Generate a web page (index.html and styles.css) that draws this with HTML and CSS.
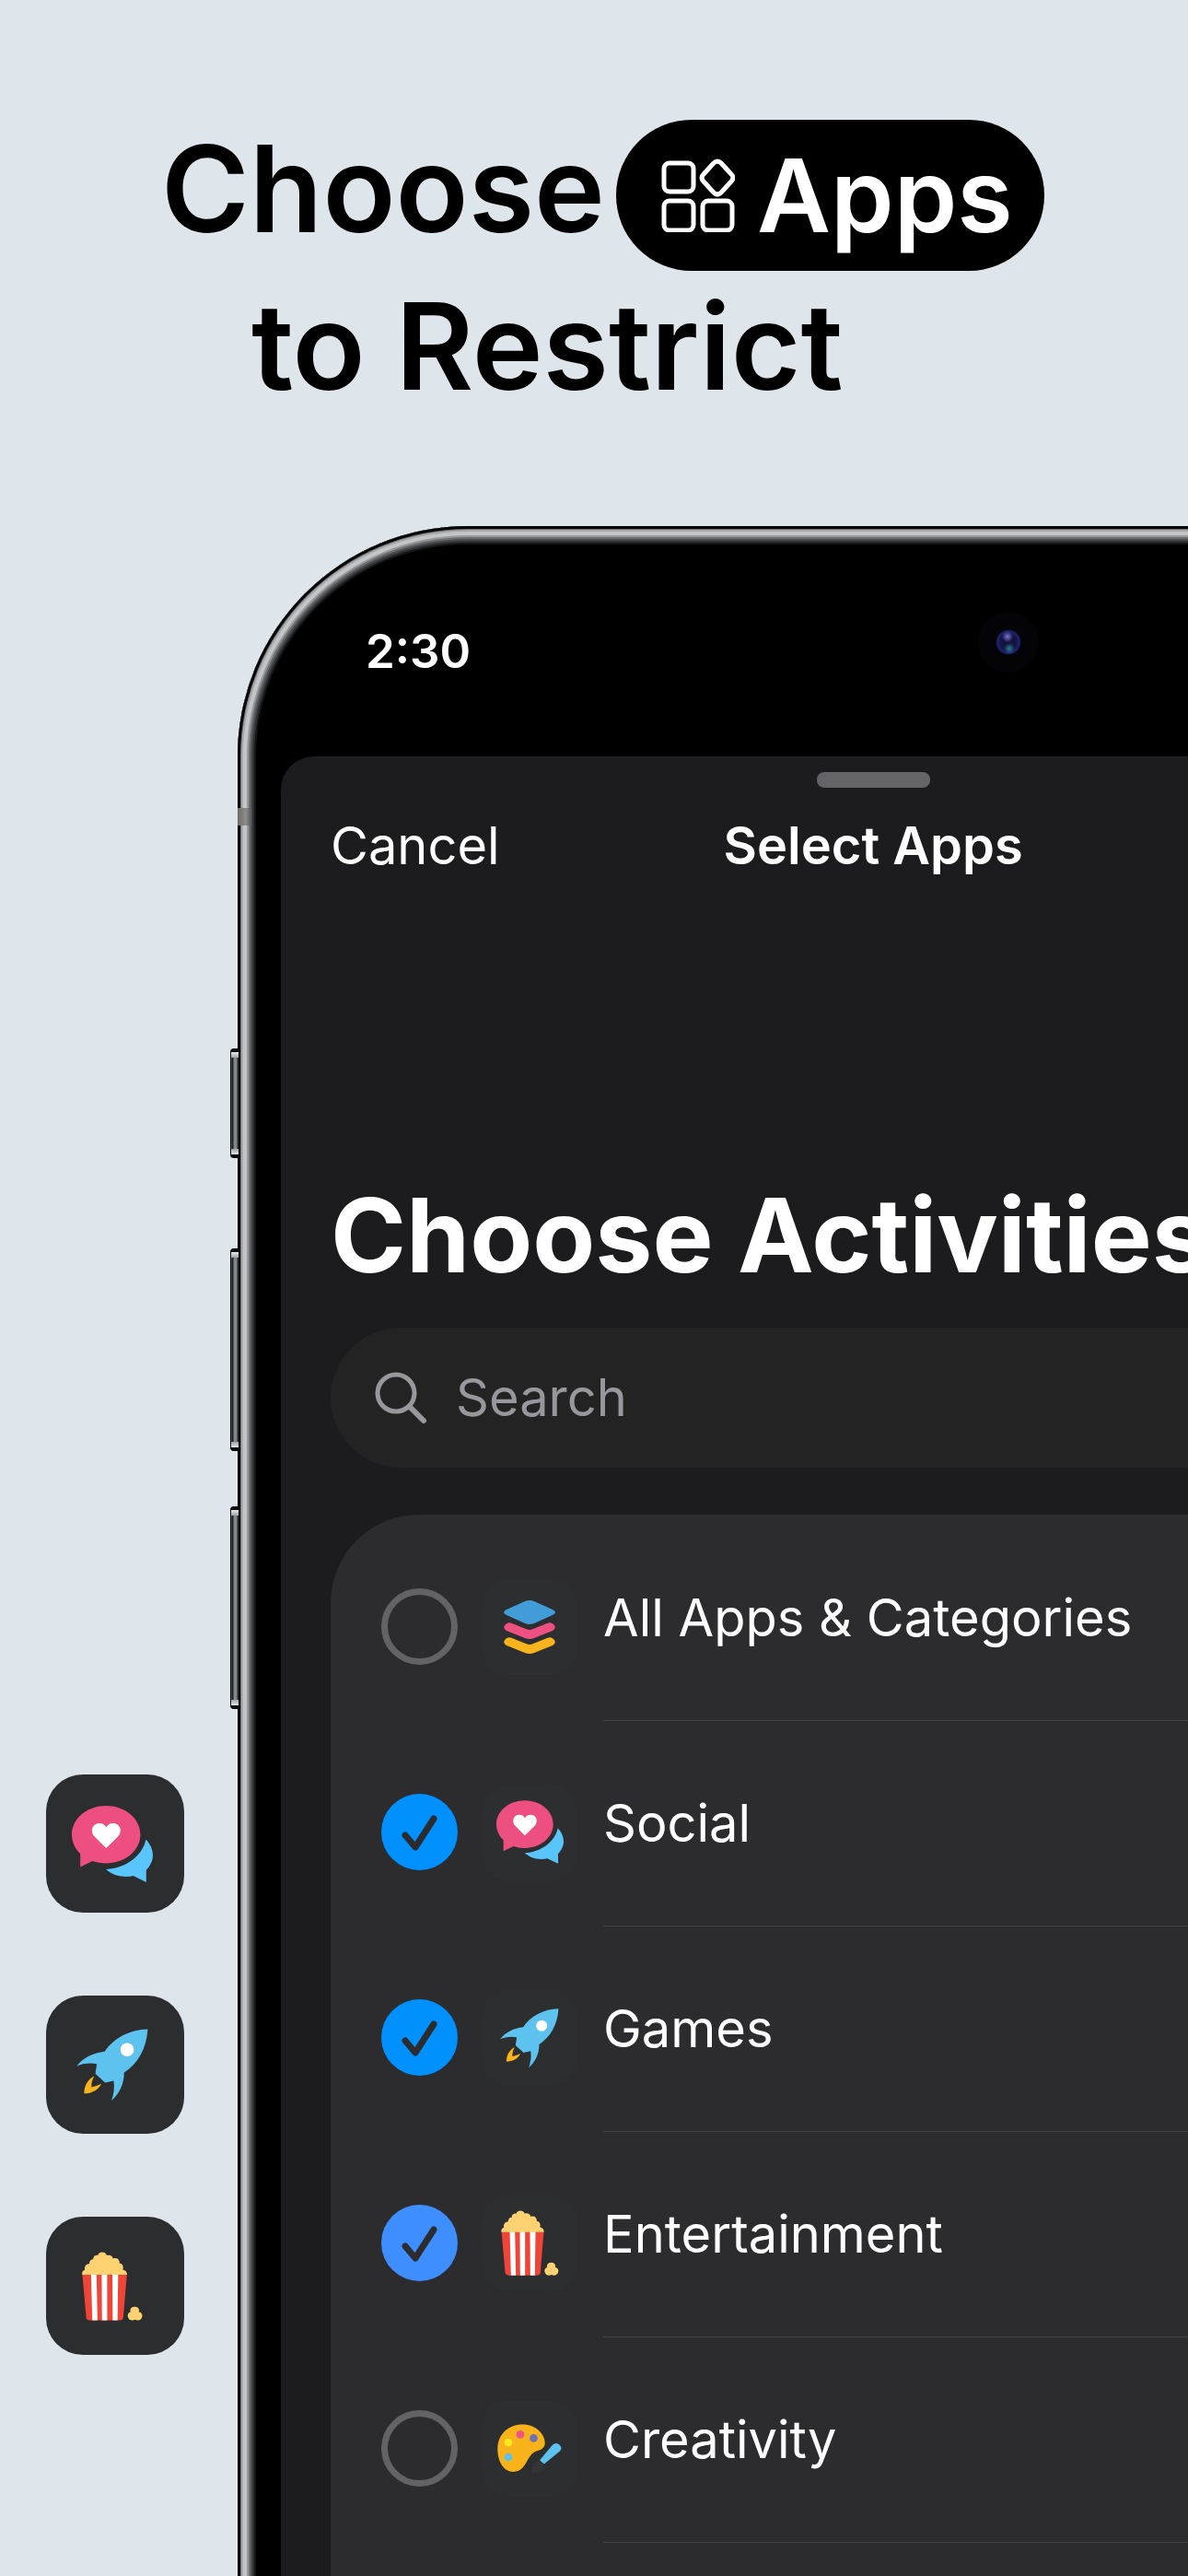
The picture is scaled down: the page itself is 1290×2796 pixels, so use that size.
FILE: index.html
```html
<!DOCTYPE html>
<html lang="en">
  <head>
    <meta charset="UTF-8" />
    <meta name="viewport" content="width=device-width, initial-scale=1.0" />
    <title>Choose Apps to Restrict</title>
    <link rel="stylesheet" href="styles.css">
  </head>
  <body>
    <!-- shared icons -->
    <svg class="defs" aria-hidden="true">
      <symbol id="stack" viewBox="0 0 56 58">
        <path fill="#419cd8" d="M23 1Q28 -1 33 1L53 10Q59 13 53 16L33 25Q28 27 23 25L3 16Q-3 13 3 10Z"/>
        <path fill="#ef5082" d="M2 26Q5 23 9 25L24 31Q28 33 32 31L47 25Q51 23 54 26Q58 30 53 33L33 41Q28 43 23 41L3 33Q-2 30 2 26Z"/>
        <path fill="#f9b31c" d="M2 42Q5 39 9 41L24 47Q28 49 32 47L47 41Q51 39 54 42Q58 46 53 49L33 57Q28 59 23 57L3 49Q-2 46 2 42Z"/>
      </symbol>
      <symbol id="social" viewBox="448 108 220 207">
        <path fill="#ec4f80" d="M541 108C592 108 634 142 634 186C634 230 592 264 541 264C528 264 515 262 504 258L471 274V238C457 225 448 206 448 186C448 142 490 108 541 108Z"/>
        <path fill="#fff" d="M541 223L511 193C496 178 503 155 523 155C533 155 538 160 541 166C545 160 550 155 560 155C580 155 587 178 572 193Z"/>
        <path fill="#5ac5fa" d="M649 199C662 213 668 228 668 242C668 257 660 272 650 282V315L615 298C588 304 558 297 541 280C592 278 640 245 649 199Z"/>
      </symbol>
      <symbol id="rocket" viewBox="459 782 191 192">
        <path fill="#5dc3ee" d="M649 783C600 784 556 808 534 843C504 846 475 860 459 882C475 874 497 872 513 876L509 902L535 926L558 921C561 940 558 958 552 974C573 957 586 930 586 899C622 876 646 835 649 783Z"/>
        <circle cx="594" cy="838" r="18" fill="#fff"/>
        <path fill="#f9b31c" d="M506 908C488 918 479 935 479 955C499 955 517 946 525 929C515 934 507 936 499 938C498 928 500 920 506 908Z"/>
      </symbol>
      <symbol id="popcorn" viewBox="466 116 188 213">
        <path fill="#ef4438" d="M467 184H605L594 318Q593 328 583 328H491Q480 328 479 318Z"/>
        <path fill="#fff" d="M494 184H511L514 328H498ZM527 184H544V328H528ZM560 184H578L576 328H561Z"/>
        <path fill="#fed270" d="M467 187C465 178 470 173 475 172C472 162 479 154 489 153C488 145 494 138 501 139C499 131 508 125 515 127C519 114 538 114 543 127C551 124 561 128 562 137C574 133 583 140 582 151C592 152 596 163 592 171C602 173 606 179 605 187Z"/>
        <path fill="#fed270" d="M616 302C613 292 620 286 629 286C639 286 645 292 642 302C650 302 654 310 652 317C649 328 639 330 630 326C621 330 611 328 608 317C606 309 610 303 616 302Z"/>
      </symbol>
      <symbol id="palette" viewBox="454 812 211 162">
        <path fill="#f8b31b" d="M537 813C580 813 610 845 610 873C610 890 597 897 584 900C548 910 552 968 507 968C475 968 455 935 455 893C455 845 490 813 537 813Z"/>
        <circle cx="529" cy="846" r="13" fill="#ef5285"/>
        <circle cx="573" cy="858" r="13" fill="#7071b5"/>
        <circle cx="490" cy="872" r="13" fill="#fbe91e"/>
        <circle cx="490" cy="920" r="13" fill="#5dc3ee"/>
        <path fill="#5dc3ee" d="M593 930L634 881Q647 870 658 880Q669 891 657 902L607 943Z"/>
        <path fill="#343434" d="M564 972C572 962 565 942 582 934L592 932L606 945C609 962 590 976 564 972Z"/>
      </symbol>
    </svg>

    <header class="headline">
      <h1>
        <span class="line first">
          Choose
          <span class="pill">
            <svg class="grid-icon" viewBox="0 0 80 80" fill="none" stroke="#fff" stroke-width="5" aria-hidden="true">
              <rect x="3" y="5" width="32" height="31" rx="6"/>
              <rect x="3" y="46" width="32" height="32" rx="6"/>
              <rect x="45" y="46" width="32" height="32" rx="6"/>
              <path stroke-linejoin="round" d="M57 5Q61 1 65 5L76 17Q80 21 76 25L65 37Q61 41 57 37L46 25Q42 21 46 17Z"/>
            </svg>
            <span class="pill-text">Apps</span>
          </span>
        </span>
        <span class="line second">to Restrict</span>
      </h1>
    </header>

    <main class="stage">
      <aside class="tiles">
        <div class="tile"><svg class="social"><use href="#social"/></svg></div>
        <div class="tile"><svg class="rocket"><use href="#rocket"/></svg></div>
        <div class="tile"><svg class="popcorn"><use href="#popcorn"/></svg></div>
      </aside>

      <div class="phone">
        <i class="side action"></i>
        <i class="side up"></i>
        <i class="side down"></i>
        <i class="band"></i>

        <div class="status">
          <time>2:30</time>
          <div class="island"><span class="camera"></span></div>
        </div>

        <section class="sheet">
          <div class="grabber"></div>
          <nav class="bar">
            <button type="button" class="cancel">Cancel</button>
            <h2>Select Apps</h2>
          </nav>
          <h3 class="title">Choose Activities</h3>

          <label class="search">
            <svg viewBox="0 0 57 57" fill="none" stroke="#98979d" stroke-width="5" stroke-linecap="round" aria-hidden="true">
              <circle cx="23" cy="23" r="20"/>
              <path stroke-width="6" d="M38 38L53 53"/>
            </svg>
            <input type="search" placeholder="Search" aria-label="Search">
          </label>

          <ul class="list">
            <li>
              <input type="checkbox" id="all">
              <span class="icon"><svg class="stack"><use href="#stack"/></svg></span>
              <label for="all">All Apps &amp; Categories</label>
            </li>
            <li>
              <input type="checkbox" id="soc" checked>
              <span class="icon"><svg class="social"><use href="#social"/></svg></span>
              <label for="soc">Social</label>
            </li>
            <li>
              <input type="checkbox" id="games" checked>
              <span class="icon"><svg class="rocket"><use href="#rocket"/></svg></span>
              <label for="games">Games</label>
            </li>
            <li>
              <input type="checkbox" id="ent" class="soft" checked>
              <span class="icon"><svg class="popcorn"><use href="#popcorn"/></svg></span>
              <label for="ent">Entertainment</label>
            </li>
            <li>
              <input type="checkbox" id="creat">
              <span class="icon"><svg class="palette"><use href="#palette"/></svg></span>
              <label for="creat">Creativity</label>
            </li>
          </ul>
        </section>
      </div>
    </main>
  </body>
</html>
```

FILE: styles.css
```css
* {
  margin: 0;
  padding: 0;
  box-sizing: border-box;
}
body {
  display: flex;
  flex-direction: column;
  min-height: 100vh;
  background: #dee5eb;
  color: #000;
  font-family: Inter, "Liberation Sans", sans-serif;
}
ul {
  list-style: none;
}
svg {
  display: block;
}
.defs {
  position: absolute;
  width: 0;
  height: 0;
}

/* headline */
.headline {
  padding: 123px 0 113px 175px;
}
h1 {
  font-size: 130px;
  font-weight: 600;
  line-height: 164px;
}
.line {
  display: flex;
  align-items: baseline;
  white-space: nowrap;
}
.first {
  gap: 12px;
}
.second {
  padding-left: 98px;
}
.pill {
  display: flex;
  align-items: center;
  gap: 24px;
  height: 164px;
  padding: 0 34px 0 49px;
  border-radius: 82px;
  background: #000;
  color: #fff;
  font-size: 110px;
}
.pill-text {
  align-self: baseline;
}
.grid-icon {
  width: 80px;
  height: 80px;
}

.stage {
  flex: 1;
  display: flex;
  overflow: clip;
}

/* floating app tiles */
.tiles {
  flex: none;
  display: flex;
  flex-direction: column;
  gap: 90px;
  width: 20vw;
  padding: 1355px 0 0 50px;
}
.tile {
  display: flex;
  align-items: center;
  justify-content: center;
  width: 150px;
  height: 150px;
  padding-right: 6px;
  border-radius: 40px;
  background: #2c2d2f;
}
.tile .social { width: 88px; height: 83px; }
.tile .rocket { width: 78px; height: 78px; }
.tile .popcorn { width: 66px; height: 75px; }

/* phone, runs off the right edge */
.phone {
  position: relative;
  flex: none;
  display: flex;
  flex-direction: column;
  width: 107vw;
  padding: 0 47px;
  border-radius: 250px 250px 0 0;
  background: #000;
}
/* metal rim, its lower edge stays below the page */
.phone::before {
  content: "";
  position: absolute;
  inset: 0 0 -40px;
  border-radius: 250px 250px 0 0;
  pointer-events: none;
  box-shadow:
    inset 0 0 0 3px #060607,
    inset 0 0 0 4px #6b6c6f,
    inset 0 0 0 6px #a9aaad,
    inset 0 0 0 10px #c4c5c8,
    inset 0 0 0 12px #98999c,
    inset 0 0 0 14px #6c6d70,
    inset 0 0 0 16px #4b4c50,
    inset 0 0 0 18px #303135,
    inset 0 0 0 20px #151517;
}
.side {
  position: absolute;
  left: -8px;
  width: 9px;
  border: 1px solid #08090a;
  border-width: 4px 0 4px 1px;
  border-radius: 4px 0 0 4px;
  background:
    linear-gradient(#e8eaec, #a0a1a3) top / 100% 6px no-repeat,
    linear-gradient(#a0a1a3, #e8eaec) bottom / 100% 6px no-repeat,
    linear-gradient(90deg, #4b4c4e 0 1px, #1c1d1e 1px 2px, #858687 3px 6px, #2a2a2b 7px);
}
.action { top: 567px; height: 119px; }
.up { top: 784px; height: 220px; }
.down { top: 1064px; height: 220px; }
.band {
  position: absolute;
  left: 0;
  top: 306px;
  width: 15px;
  height: 19px;
  background: linear-gradient(90deg, #6b6c6a, #8b8b89 60%, #55565a);
}

.status {
  display: grid;
  grid-template-columns: 1fr 403px 1fr;
  height: 250px;
  padding: 66px 0 0;
}
.status time {
  padding: 10px 0 0 92px;
  color: #fff;
  font-size: 51px;
  font-weight: 600;
  line-height: 120px;
}
.island {
  display: flex;
  align-items: center;
  justify-content: flex-end;
  height: 120px;
  padding-right: 22px;
  border-radius: 60px;
}
.camera {
  width: 66px;
  height: 66px;
  border-radius: 50%;
  background:
    radial-gradient(circle at 32px 27px, #7f78d8 0, rgba(70, 62, 180, 0) 6px),
    radial-gradient(circle at 34px 40px, #2a7f92 0, rgba(58, 40, 160, 0) 6px),
    radial-gradient(circle at center, #14143f 0, #14143f 8px, #1e2370 12px, #040408 14px);
}

/* sheet */
.sheet {
  flex: 1;
  display: flex;
  flex-direction: column;
  padding: 17px 54px 0;
  border-radius: 36px 36px 0 0;
  background: #1c1c1e;
  color: #fff;
}
.grabber {
  align-self: center;
  width: 123px;
  height: 17px;
  border-radius: 8px;
  background: #646367;
}
.bar {
  display: grid;
  grid-template-columns: 1fr auto 1fr;
  margin-top: 29px;
  line-height: 68px;
}
.bar h2 {
  font-size: 56px;
  font-weight: 600;
}
.cancel {
  justify-self: start;
  border: 0;
  background: none;
  color: #fff;
  font: inherit;
  font-size: 56px;
}
.title {
  margin: 321px 0 32px;
  font-size: 111px;
  font-weight: 700;
  line-height: 136px;
  white-space: nowrap;
}
.search {
  display: flex;
  align-items: center;
  gap: 31px;
  height: 152px;
  padding: 0 48px;
  border-radius: 76px;
  background: #232323;
}
.search svg {
  width: 57px;
  height: 57px;
}
.search input {
  flex: 1;
  border: 0;
  outline: 0;
  background: none;
  color: #fff;
  font: inherit;
  font-size: 56px;
}
.search input::placeholder {
  color: #98979d;
  opacity: 1;
}

.list {
  flex: 1;
  margin-top: 51px;
  padding-top: 1px;
  border-radius: 96px 96px 0 0;
  background: #2c2c2e;
}
.list li {
  display: flex;
  align-items: center;
  height: 223px;
  padding-left: 55px;
}
.list input {
  flex: none;
  appearance: none;
  width: 83px;
  height: 83px;
  margin: 18px 26px 0 0;
  border: 7px solid #636366;
  border-radius: 50%;
}
.list input:checked {
  border: 0;
  background: #0091ff url("data:image/svg+xml,%3Csvg xmlns='http://www.w3.org/2000/svg' viewBox='0 0 83 83'%3E%3Cpath d='M26 45L37 58L57 27' fill='none' stroke='%232c2c2e' stroke-width='7' stroke-linecap='round' stroke-linejoin='round'/%3E%3C/svg%3E") center / 100%;
}
.list input.soft:checked {
  background-color: #3e8eff;
}
.icon {
  flex: none;
  display: flex;
  align-items: center;
  justify-content: center;
  width: 104px;
  height: 104px;
  margin: 18px 28px 0 0;
  border-radius: 28px;
  background: #2c2e2f;
}
.icon .stack { width: 56px; height: 58px; }
.icon .social { width: 73px; height: 69px; }
.icon .rocket { width: 64px; height: 64px; }
.icon .popcorn { width: 63px; height: 71px; }
.icon .palette { width: 70px; height: 54px; }
.list label {
  flex: 1;
  border-bottom: 1px solid #454547;
  font-size: 56px;
  line-height: 222px;
}
```
